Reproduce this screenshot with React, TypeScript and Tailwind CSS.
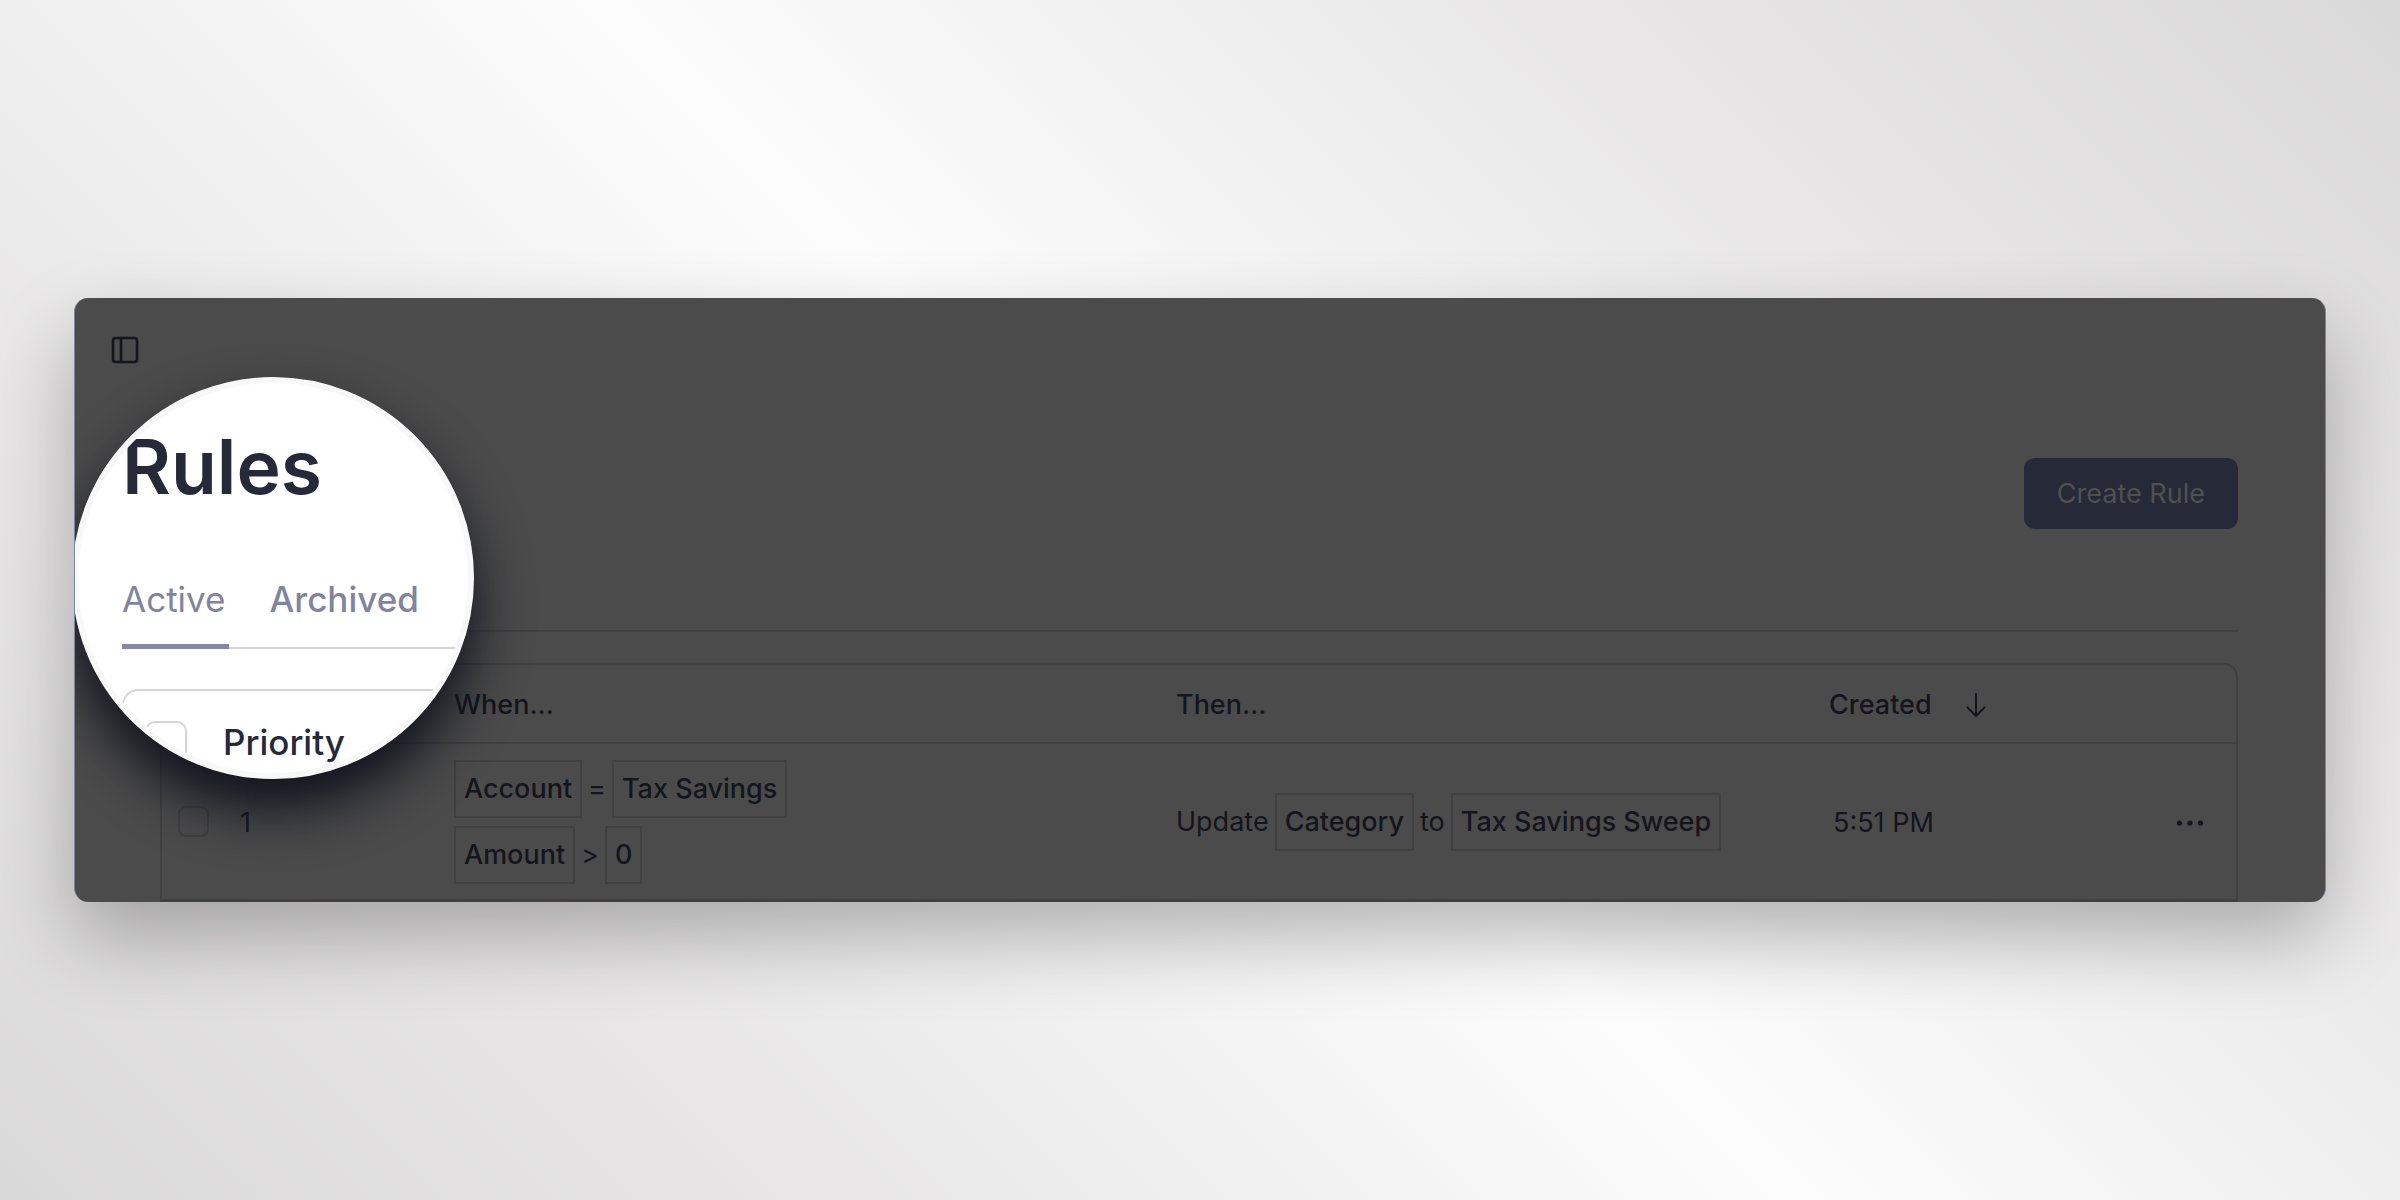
import type { ReactNode } from "react";
import { Ellipsis, PanelLeft } from "lucide-react";

function Tag({ children }: { children: ReactNode }) {
  return (
    <span className="flex h-[58px] items-center border-2 border-[#404040] px-2 font-medium">{children}</span>
  );
}

function Lens() {
  return (
    <section className="absolute top-[79px] -left-[3px] h-[402px] w-[402px] overflow-hidden rounded-full border-[6px] border-[#f8f8f8] bg-white pt-12 pl-11 text-[#262937]">
      <h1 className="text-[75px] leading-[72px] font-semibold">Rules</h1>
      <nav className="mt-[68px] flex gap-10 border-b-2 border-[#d5d5d5] text-[35px] leading-[56px] text-[#80849e]">
        <a href="#active" className="-mb-[2px] border-b-[5px] border-[#8488a4] pr-1 pb-[17px]">Active</a>
        <a href="#archived" className="font-medium">Archived</a>
      </nav>
      <div className="mt-10 -mr-12 flex h-24 gap-9 rounded-2xl border-2 border-[#d5d5d5] pt-[30px] pl-[21px]">
        <input
          id="all"
          type="checkbox"
          aria-label="Select all rules"
          className="size-[42px] appearance-none rounded-[10px] border-2 border-[#d5d5d5] bg-white"
        />
        <label htmlFor="all" className="text-[35px] leading-[42px] font-medium">Priority</label>
      </div>
    </section>
  );
}

export default function App() {
  return (
    <main className="flex min-h-screen items-center bg-[linear-gradient(45deg,#dad9da_0%,#e8e6e7_23%,#eeeeee_32%,#fcfcfc_50%,#eeeeee_68%,#e8e6e7_77%,#dad9da_100%)] px-[74px] font-['Inter','Liberation_Sans',sans-serif] text-[27px] leading-8 text-[#14151d]">
      <div className="w-full rounded-[14px] shadow-[0_36px_80px_rgba(0,0,0,0.28)]">
        <div className="relative w-full overflow-hidden rounded-[14px] border-x border-[#80839c] bg-[#4b4b4b]">
          <header className="flex pt-9 pl-[34px]">
            <button aria-label="Toggle sidebar">
              <PanelLeft size={32} strokeWidth={2} />
            </button>
          </header>
          <div className="pr-[87px] pl-[85px]">
            <div className="flex h-[266px] items-start justify-end border-b-2 border-[#404040] pt-[92px]">
              <button className="h-[71px] rounded-[11px] bg-[#262937] px-[33px] text-[#505050]">Create Rule</button>
            </div>
            <div className="mt-[31px] rounded-t-[14px] border-2 border-b-0 border-[#404040]">
              <table className="w-full table-fixed text-left">
                <colgroup>
                  <col className="w-[78px]" />
                  <col className="w-[214px]" />
                  <col className="w-[722px]" />
                  <col className="w-[653px]" />
                  <col />
                  <col className="w-[120px]" />
                </colgroup>
                <thead>
                  <tr className="h-[78px] border-b-2 border-[#404040]">
                    <th />
                    <th />
                    <th className="pt-[2px] font-medium">When...</th>
                    <th className="pt-[2px] font-medium">Then...</th>
                    <th className="pt-[2px] font-medium" aria-sort="descending">
                      <button className="flex items-center gap-[34px]">
                        Created
                        <svg width="20" height="24" viewBox="0 0 20 24" fill="none" stroke="currentColor" strokeWidth="2" strokeLinecap="round" strokeLinejoin="round" aria-hidden="true">
                          <path d="M10 1v22M1.500 14.500l8.500 8.500 8.500-8.500" />
                        </svg>
                      </button>
                    </th>
                    <th />
                  </tr>
                </thead>
                <tbody>
                  <tr className="h-[157px] border-b-[3px] border-[#404040]">
                    <td className="pl-4">
                      <input
                        type="checkbox"
                        aria-label="Select rule 1"
                        className="block size-[31px] appearance-none rounded-lg border-2 border-[#404043] bg-transparent"
                      />
                    </td>
                    <td className="pt-[2px]">1</td>
                    <td>
                      <div className="flex flex-col gap-2">
                        <div className="flex items-center gap-1.5">
                          <Tag>Account</Tag>=<Tag>Tax Savings</Tag>
                        </div>
                        <div className="flex items-center gap-1.5">
                          <Tag>Amount</Tag>&gt;<Tag>0</Tag>
                        </div>
                      </div>
                    </td>
                    <td>
                      <div className="flex items-center gap-1.5">
                        Update<Tag>Category</Tag>to<Tag>Tax Savings Sweep</Tag>
                      </div>
                    </td>
                    <td className="pt-[2px] pl-1">5:51 PM</td>
                    <td className="pt-[2px] pr-7">
                      <button aria-label="Rule actions" className="ml-auto block">
                        <Ellipsis size={36} strokeWidth={1.5} />
                      </button>
                    </td>
                  </tr>
                </tbody>
              </table>
            </div>
          </div>
          <div className="pointer-events-none absolute top-[79px] -left-[3px] size-[402px] rounded-full shadow-[0_30px_54px_rgba(16,18,28,1)]" />
          <Lens />
        </div>
      </div>
    </main>
  );
}
